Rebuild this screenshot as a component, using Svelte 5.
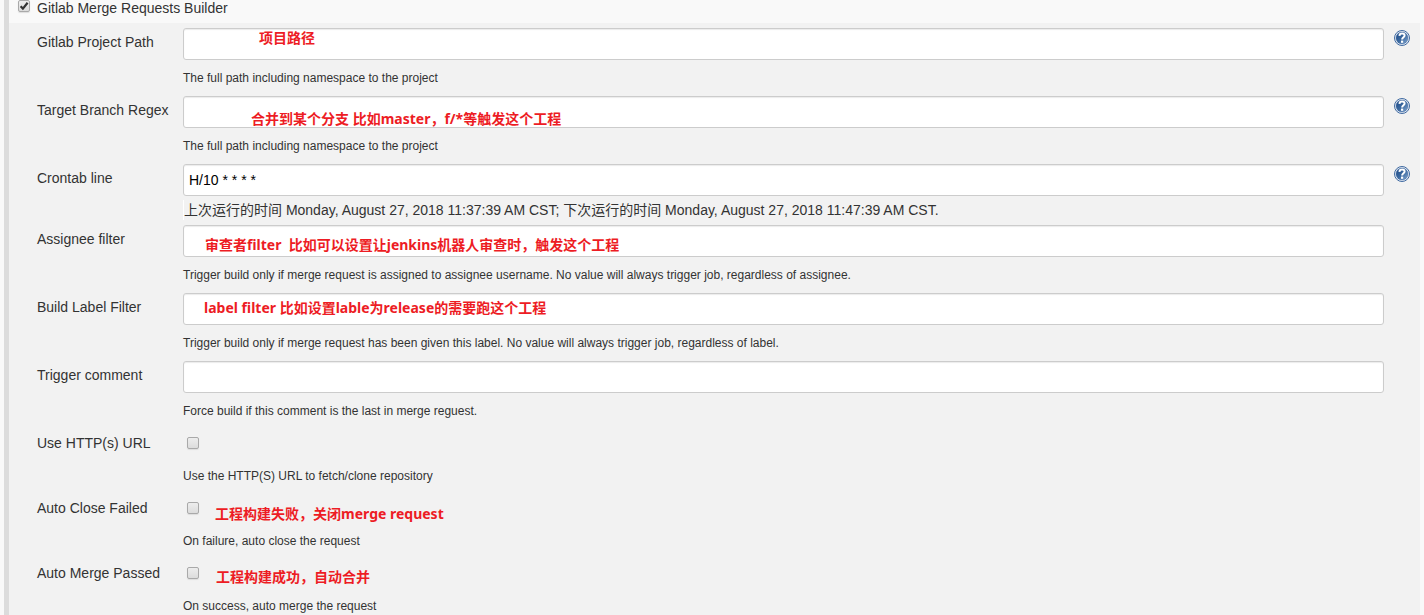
<script>
  const rows = [
    { id: 'project', label: 'Gitlab Project Path', type: 'text', value: '', info: true,
      help: 'The full path including namespace to the project', note: '项目路径', x: 76, y: 0 },
    { id: 'branch', label: 'Target Branch Regex', type: 'text', value: '', info: true,
      help: 'The full path including namespace to the project', note: '合并到某个分支 比如master，f/*等触发这个工程', x: 68, y: 13 },
    { id: 'cron', label: 'Crontab line', type: 'text', value: 'H/10 * * * *', info: true,
      status: '上次运行的时间 Monday, August 27, 2018 11:37:39 AM CST; 下次运行的时间 Monday, August 27, 2018 11:47:39 AM CST.' },
    { id: 'assignee', label: 'Assignee filter', type: 'text', value: '',
      help: 'Trigger build only if merge request is assigned to assignee username. No value will always trigger job, regardless of assignee.',
      note: '审查者filter  比如可以设置让jenkins机器人审查时，触发这个工程', x: 22, y: 10 },
    { id: 'label', label: 'Build Label Filter', type: 'text', value: '',
      help: 'Trigger build only if merge request has been given this label. No value will always trigger job, regardless of label.',
      note: 'label filter 比如设置lable为release的需要跑这个工程', x: 21, y: 5 },
    { id: 'comment', label: 'Trigger comment', type: 'text', value: '',
      help: 'Force build if this comment is the last in merge reguest.' },
    { id: 'http', label: 'Use HTTP(s) URL', type: 'checkbox', help: 'Use the HTTP(S) URL to fetch/clone repository' },
    { id: 'close', label: 'Auto Close Failed', type: 'checkbox', help: 'On failure, auto close the request',
      note: '工程构建失败，关闭merge request', x: 32, y: 10 },
    { id: 'merge', label: 'Auto Merge Passed', type: 'checkbox', help: 'On success, auto merge the request',
      note: '工程构建成功，自动合并', x: 33, y: 8 }
  ];
</script>

<main>
  <form>
    <label class="head">
      <input type="checkbox" checked />
      <span>Gitlab Merge Requests Builder</span>
    </label>
    <div class="settings">
      {#each rows as row (row.id)}
        <div class="row">
          <label class="name" for={row.id}>{row.label}</label>
          <div class="field">
            {#if row.type === 'text'}
              <input class="text" id={row.id} type="text" value={row.value} />
            {:else}
              <div class="tick"><input id={row.id} type="checkbox" /></div>
            {/if}
            {#if row.note}
              <span class="note" style="left: {row.x}px; top: {row.y}px">{row.note}</span>
            {/if}
            {#if row.status}<div class="status">{row.status}</div>{/if}
            {#if row.help}<div class="help">{row.help}</div>{/if}
          </div>
          {#if row.info}
            <button class="info" type="button" aria-label="Help">
              <svg viewBox="0 0 16 16" width="16" height="16">
                <defs>
                  <linearGradient id="blue-{row.id}" x1="0" y1="0" x2="1" y2="1">
                    <stop offset="0" stop-color="#1c4783" />
                    <stop offset="0.5" stop-color="#3a689f" />
                    <stop offset="1" stop-color="#86a9d2" />
                  </linearGradient>
                </defs>
                <circle cx="8" cy="8" r="7.5" fill="#eef3f9" stroke="#3f69a0" stroke-width="1" />
                <circle cx="8" cy="8" r="6" fill="url(#blue-{row.id})" stroke="#2f5b97" stroke-width="0.4" />
                <path d="M5.4 5.9C5.5 4.2 6.6 3.5 8.1 3.5C9.7 3.5 10.6 4.2 10.6 5.5C10.6 7.3 8.1 7.3 8.1 9.6" fill="none" stroke="#fff" stroke-width="2" />
                <rect x="7" y="10.6" width="2.2" height="2.2" fill="#fff" />
              </svg>
            </button>
          {/if}
        </div>
      {/each}
    </div>
  </form>
</main>

<style>
  :global(body) {
    margin: 0;
    background: #f9f9f9;
  }
  main {
    box-sizing: border-box;
    min-height: 100vh;
    padding: 0 4px;
    display: flex;
    color: #333;
    font: 14px/20px "Liberation Sans", "Noto Sans CJK SC", sans-serif;
  }
  form {
    flex: 1;
    display: flex;
    flex-direction: column;
    border-left: 5px solid #dcdcdc;
  }
  .head {
    display: flex;
    gap: 7px;
    padding: 0 0 7px 9px;
    line-height: 16px;
  }
  .settings {
    flex: 1;
    padding: 5px 10px 0 28px;
    background: #f2f2f2;
  }
  .row {
    display: grid;
    grid-template-columns: 146px minmax(0, 1fr) 26px;
    align-items: start;
    padding-bottom: 9px;
  }
  .row:last-child {
    padding-bottom: 0;
  }
  .row:has(.status) {
    padding-bottom: 0;
  }
  .name {
    padding-top: 4px;
    white-space: nowrap;
  }
  .field {
    position: relative;
  }
  .text {
    display: block;
    box-sizing: border-box;
    width: 100%;
    height: 32px;
    padding: 0 5px;
    border: 1px solid #ccc;
    border-radius: 3px;
    background: #fff;
    box-shadow: inset 0 1px 1px #ececec;
    color: #000;
    font: inherit;
  }
  input[type='checkbox'] {
    appearance: none;
    display: block;
    box-sizing: border-box;
    flex: none;
    width: 12px;
    height: 12px;
    margin: 0;
    border: 1px solid #a9a9a9;
    border-radius: 2px;
    background: linear-gradient(#ededed, #dcdcdc);
    box-shadow: 0 1px 1px #ddd;
  }
  input[type='checkbox']:checked {
    background: url("data:image/svg+xml,%3Csvg xmlns='http://www.w3.org/2000/svg' viewBox='0 0 10 10'%3E%3Cpath d='M1.6 5.2L3.9 7.6L8.6 1.8' fill='none' stroke='%23333' stroke-width='2.2'/%3E%3C/svg%3E"), linear-gradient(#ededed, #dcdcdc);
  }
  .tick {
    height: 21px;
    padding: 8px 0 0 4px;
  }
  .help {
    padding-top: 10px;
    font-size: 12px;
    line-height: 17px;
  }
  .status {
    height: 20px;
    margin: 4px 0 5px;
    border-left: 1px solid #fff;
  }
  .note {
    position: absolute;
    color: #ed1c24;
    font: bold 14px/20px "Noto Sans", "Noto Sans CJK SC", sans-serif;
    white-space: pre;
    pointer-events: none;
  }
  .info {
    display: block;
    width: 16px;
    height: 16px;
    margin: 2px 0 0 10px;
    padding: 0;
    border: 0;
    background: none;
  }
  .info svg {
    display: block;
  }
</style>
